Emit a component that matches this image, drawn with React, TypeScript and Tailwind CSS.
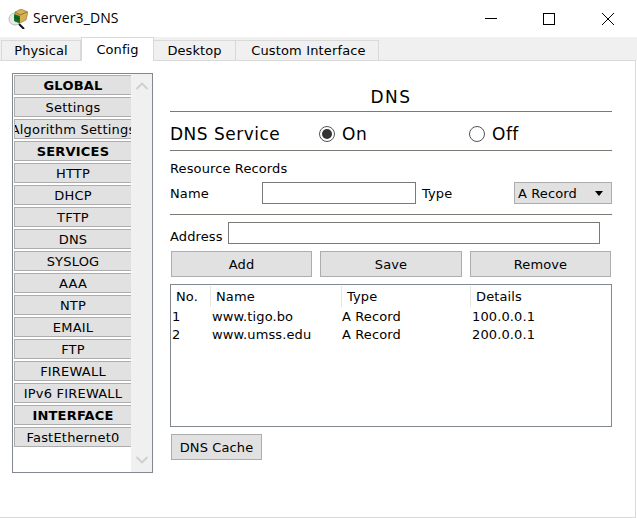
import { ChevronUp, ChevronDown } from "lucide-react";

const menu = [
  { label: "GLOBAL", bold: true },
  { label: "Settings" },
  { label: "Algorithm Settings" },
  { label: "SERVICES", bold: true },
  { label: "HTTP" },
  { label: "DHCP" },
  { label: "TFTP" },
  { label: "DNS" },
  { label: "SYSLOG" },
  { label: "AAA" },
  { label: "NTP" },
  { label: "EMAIL" },
  { label: "FTP" },
  { label: "FIREWALL" },
  { label: "IPv6 FIREWALL" },
  { label: "INTERFACE", bold: true },
  { label: "FastEthernet0" },
];

const records = [
  { no: "1", name: "www.tigo.bo", type: "A Record", details: "100.0.0.1" },
  { no: "2", name: "www.umss.edu", type: "A Record", details: "200.0.0.1" },
];

function ServerIcon() {
  return (
    <svg width="20" height="20" viewBox="0 0 20 20">
      <circle cx="7" cy="10" r="6" fill="#e8e8e8" stroke="#bcbcbc" />
      <path d="M11 15l5 5" stroke="#111" strokeWidth="2" />
      <path d="M7 3l6-3 7 3-2 8-6 3-5-2z" fill="#d9b04e" stroke="#6b5a2a" strokeWidth="0.5" />
      <path d="M7 3l5 3 7-3" fill="none" stroke="#6b5a2a" strokeWidth="0.7" />
      <path d="M6 5l6 2v7l-6-2z" fill="#12802a" />
      <path d="M8 6v7M10 7v7M6 8l6 2" stroke="#063d12" strokeWidth="0.6" />
    </svg>
  );
}

function WindowControls() {
  return (
    <div className="ml-auto flex items-center gap-[46px] pr-[23px]">
      <svg width="12" height="12" viewBox="0 0 12 12">
        <path d="M0 5.500h12" stroke="#000" />
      </svg>
      <svg width="12" height="12" viewBox="0 0 12 12">
        <rect x="0.500" y="0.500" width="11" height="11" fill="none" stroke="#000" />
      </svg>
      <svg width="12" height="12" viewBox="0 0 12 12" className="ml-px">
        <path d="M0 0l12 12M12 0L0 12" stroke="#000" />
      </svg>
    </div>
  );
}

function Radio({ checked }: { checked?: boolean }) {
  return (
    <span className="flex h-4 w-4 items-center justify-center rounded-full border border-[#555] bg-white">
      {checked && <span className="h-2.5 w-2.5 rounded-full bg-[#333]" />}
    </span>
  );
}

function FlatButton({ label, className }: { label: string; className: string }) {
  return (
    <button className={`flex items-center justify-center border border-[#adadad] bg-[#e1e1e1] pt-px text-[13px] text-black ${className}`}>
      {label}
    </button>
  );
}

export default function App() {
  return (
    <div className="h-[518px] w-[637px] overflow-hidden bg-white tracking-[0.12px] text-black [font-family:'DejaVu_Sans',sans-serif]">
      <div className="flex h-[37px] items-center pl-2">
        <ServerIcon />
        <span className="mb-px ml-[5px] text-sm [font-family:'Open_Sans',sans-serif]">Server3_DNS</span>
        <WindowControls />
      </div>

      <div className="flex h-[23px] items-end bg-[#f0f0f0] pl-px text-[13px] tracking-[0.05px]">
        <div className="flex h-[20px] w-20 items-center justify-center border border-b-0 border-[#d9d9d9]">Physical</div>
        <div className="z-10 -mb-px flex h-[24px] w-[73px] items-center justify-center border border-b-0 border-[#d9d9d9] bg-white">Config</div>
        <div className="flex h-[20px] w-[82px] items-center justify-center border border-b-0 border-l-0 border-[#d9d9d9]">Desktop</div>
        <div className="flex h-[20px] w-[143px] items-center justify-center border border-b-0 border-l-0 border-[#d9d9d9] pl-[3px] tracking-[0.15px]">Custom Interface</div>
      </div>

      <div className="mr-px flex h-[458px] items-start gap-[17px] border border-l-0 border-[#d9d9d9] pl-3 pt-3">
        <aside className="flex h-[400px] w-[141px] shrink-0 border border-[#828790] pl-px pt-px">
          <div className="flex w-[117px] flex-col gap-0.5 overflow-hidden">
            {menu.map((item) => (
              <div
                key={item.label}
                className={`flex h-5 shrink-0 items-center justify-center overflow-hidden whitespace-nowrap border border-[#adadad] border-r-0 bg-[#e1e1e1] pt-px text-[13px] tracking-[0.2px] ${item.bold ? "font-bold" : ""}`}
              >
                {item.label}
              </div>
            ))}
          </div>
          <div className="-mt-px flex flex-1 flex-col items-center justify-between bg-[#f0f0f0] py-0.5 text-[#cfcfcf]">
            <ChevronUp size={20} strokeWidth={2.2} />
            <ChevronDown size={20} strokeWidth={2.2} />
          </div>
        </aside>

        <main className="w-[442px]">
          <h2 className="flex h-[39px] items-end justify-center border-b border-[#7d7a75] pb-px text-[17px] tracking-[1.500px]">DNS</h2>

          <div className="flex h-[39px] items-center border-b border-[#7d7a75] pt-[5px] text-[17px] tracking-[0.5px]">
            <span className="mt-0.5 w-[149px]">DNS Service</span>
            <Radio checked />
            <span className="ml-[7px] mt-0.5 w-[127px]">On</span>
            <Radio />
            <span className="ml-[7px] mt-0.5">Off</span>
          </div>

          <p className="mt-[10px] text-[13px] leading-[16px]">Resource Records</p>

          <div className="mt-[5px] flex h-[22px] items-center text-[13px]">
            <span className="w-[92px] pt-0.5">Name</span>
            <input className="h-[22px] w-[154px] border border-[#7a7a7a] bg-white" />
            <span className="ml-1.5 w-[92px] pt-0.5">Type</span>
            <div className="flex h-[22px] flex-1 items-center justify-between border border-[#adadad] bg-[#e1e1e1] pl-[3px] pr-2 pt-px">
              A Record
              <span className="h-0 w-0 border-x-4 border-t-[5px] border-x-transparent border-t-black" />
            </div>
          </div>

          <div className="mt-[10px] border-b border-[#7d7a75]" />

          <div className="mt-[7px] flex h-[22px] items-center text-[13px]">
            <span className="w-[58px] pt-2">Address</span>
            <input className="h-[22px] w-[372px] border border-[#7a7a7a] bg-white" />
          </div>

          <div className="mt-[7px] flex gap-2 pl-px">
            <FlatButton label="Add" className="h-[26px] w-[141px]" />
            <FlatButton label="Save" className="h-[26px] w-[142px]" />
            <FlatButton label="Remove" className="h-[26px] w-[141px]" />
          </div>

          <div className="mt-[7px] h-[143px] border border-[#828790] text-[13px]">
            <div className="mt-px flex h-[21px] items-center">
              <span className="w-[39px] pl-[5px]">No.</span>
              <span className="h-full w-[131px] border-l border-[#e5e5e5] pl-[5px] leading-[21px]">Name</span>
              <span className="h-full w-[129px] border-l border-[#e5e5e5] pl-[5px] leading-[21px]">Type</span>
              <span className="h-full border-l border-[#e5e5e5] pl-[5px] leading-[21px]">Details</span>
            </div>
            {records.map((r) => (
              <div key={r.no} className="flex h-[18px] items-center pt-0.5 first:mt-[1px]">
                <span className="w-[41px] pl-px">{r.no}</span>
                <span className="w-[130px]">{r.name}</span>
                <span className="w-[130px]">{r.type}</span>
                <span>{r.details}</span>
              </div>
            ))}
          </div>

          <div className="mt-[7px] pl-px">
            <FlatButton label="DNS Cache" className="h-[26px] w-[91px]" />
          </div>
        </main>
      </div>
    </div>
  );
}
